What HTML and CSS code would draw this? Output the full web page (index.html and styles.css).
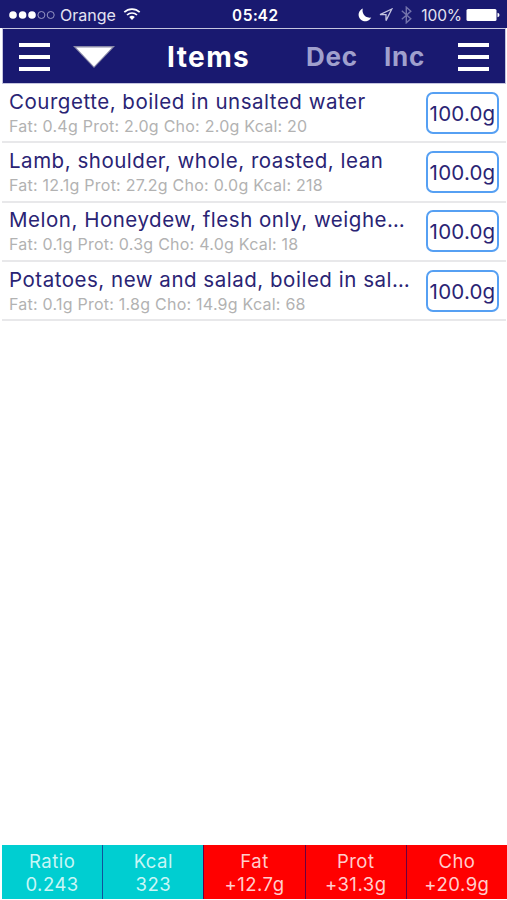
FILE: index.html
```html
<!DOCTYPE html>
<html lang="en">

<head>
    <meta charset="utf-8">
    <title>Items</title>
    <link rel="stylesheet" href="styles.css">
</head>

<body>
    <div class="status-bar">
        <div class="status-left">
            <svg class="signal" width="47" height="10" viewBox="0 0 47 10">
                <circle cx="4" cy="5" r="3.8" fill="#fff"/>
                <circle cx="13.6" cy="5" r="3.8" fill="#fff"/>
                <circle cx="23" cy="5" r="3.8" fill="#fff"/>
                <circle cx="32.4" cy="5" r="3.5" fill="none" stroke="#a4a4cc" stroke-width="0.9"/>
                <circle cx="41.7" cy="5" r="3.5" fill="none" stroke="#a4a4cc" stroke-width="0.9"/>
            </svg>
            <span class="carrier">Orange</span>
            <svg class="wifi" width="18" height="14" viewBox="0 0 18 14">
                <path d="M1.3 5.2a11 11 0 0 1 15.4 0M4 8a7.2 7.2 0 0 1 10 0" fill="none" stroke="#fff" stroke-width="1.7"/>
                <path d="M9 13L6.2 10a4 4 0 0 1 5.6 0z" fill="#fff"/>
            </svg>
        </div>
        <div class="clock">05:42</div>
        <div class="status-right">
            <svg width="14" height="14" viewBox="0 0 14 14">
                <path d="M4.8 .6a6.6 6.6 0 1 0 8.4 8.9A7.2 7.2 0 0 1 4.8 .6z" fill="#fff"/>
            </svg>
            <svg class="location" width="14" height="14" viewBox="0 0 14 14">
                <path d="M12.8 1L1 6.6H7V12.6z" fill="none" stroke="#c4c4e0" stroke-width="1.3"/>
            </svg>
            <svg class="bluetooth" width="11" height="18" viewBox="0 0 11 18">
                <path d="M.8 4.8l9 8L5.3 16.8V1.2l4.5 4-9 8" fill="none" stroke="#7474ac" stroke-width="1.4"/>
            </svg>
            <span class="percent">100%</span>
            <svg class="battery" width="34" height="14" viewBox="0 0 34 14">
                <rect x=".5" y="1" width="30" height="12" rx="1.5" fill="#fff"/>
                <path d="M31.5 4.8q2 .4 2 2.2t-2 2.2z" fill="#fff"/>
            </svg>
        </div>
    </div>

    <div class="header">
        <button class="menu-button" title="Menu"><i></i><i></i><i></i></button>
        <button class="sort-button" title="Sort">
            <svg width="42" height="22" viewBox="0 0 42 22">
                <path d="M0 0H42L21 22z" fill="#8a8aa8"/>
                <path d="M3 1.5H39L21 20.5z" fill="#fff"/>
            </svg>
        </button>
        <div class="title">Items</div>
        <button class="step dec">Dec</button>
        <button class="step inc">Inc</button>
        <button class="menu-button" title="Options"><i></i><i></i><i></i></button>
    </div>

    <div class="items">
        <div class="item">
            <div class="item-text">
                <div class="item-name">Courgette, boiled in unsalted water</div>
                <div class="item-info">Fat: 0.4g Prot: 2.0g Cho: 2.0g Kcal: 20</div>
            </div>
            <button class="weight">100.0g</button>
        </div>
        <div class="item">
            <div class="item-text">
                <div class="item-name">Lamb, shoulder, whole, roasted, lean</div>
                <div class="item-info">Fat: 12.1g Prot: 27.2g Cho: 0.0g Kcal: 218</div>
            </div>
            <button class="weight">100.0g</button>
        </div>
        <div class="item">
            <div class="item-text">
                <div class="item-name">Melon, Honeydew, flesh only, weighe…</div>
                <div class="item-info">Fat: 0.1g Prot: 0.3g Cho: 4.0g Kcal: 18</div>
            </div>
            <button class="weight">100.0g</button>
        </div>
        <div class="item">
            <div class="item-text">
                <div class="item-name">Potatoes, new and salad, boiled in sal…</div>
                <div class="item-info">Fat: 0.1g Prot: 1.8g Cho: 14.9g Kcal: 68</div>
            </div>
            <button class="weight">100.0g</button>
        </div>
    </div>

    <div class="totals">
        <div class="total"><span>Ratio</span><span>0.243</span></div>
        <div class="total"><span>Kcal</span><span>323</span></div>
        <div class="total over"><span>Fat</span><span>+12.7g</span></div>
        <div class="total over"><span>Prot</span><span>+31.3g</span></div>
        <div class="total over"><span>Cho</span><span>+20.9g</span></div>
    </div>
</body>

</html>
```

FILE: styles.css
```css
* {
    box-sizing: border-box;
}

body {
    display: flex;
    flex-direction: column;
    height: 900px;
    margin: 0;
    background: #fff;
    font-family: Inter, 'Liberation Sans', sans-serif;
    overflow: hidden;
}

button {
    padding: 0;
    border: none;
    background: none;
    font-family: inherit;
}

svg {
    display: block;
    flex: none;
}

.status-bar {
    display: grid;
    grid-template-columns: 1fr auto 1fr;
    align-items: center;
    height: 28px;
    padding: 2px 7px 0 9px;
    background: #191970;
    color: #fff;
    font-size: 16px;
}

.status-left,
.status-right {
    display: flex;
    align-items: center;
}

.status-right {
    justify-content: flex-end;
}

.carrier {
    margin-left: 4px;
    color: #e4e4f2;
}

.wifi {
    margin-left: 7px;
    margin-top: -2px;
}

.clock {
    padding-left: 2px;
    font-size: 15.5px;
    font-weight: 600;
    font-variant-numeric: tabular-nums;
    letter-spacing: 0.5px;
}

.location {
    margin-left: 7px;
}

.bluetooth {
    margin-left: 8px;
}

.percent {
    margin-left: 9px;
    color: #e4e4f2;
    font-size: 15.5px;
    letter-spacing: -0.1px;
}

.battery {
    margin-left: 4px;
}

.header {
    display: flex;
    align-items: center;
    height: 56px;
    margin: 0 1px 0 2px;
    padding: 1px 16px 0 16px;
    border: 1px solid #c5c5df;
    background: #191970;
}

.menu-button {
    display: flex;
    flex-direction: column;
    gap: 8px;
    width: 31px;
}

.menu-button i {
    height: 4px;
    background: #fff;
}

.sort-button {
    margin-left: 23px;
}

.title {
    width: 83px;
    margin-left: 52px;
    color: #fff;
    font-size: 28px;
    font-weight: 700;
    letter-spacing: 1.4px;
    white-space: nowrap;
}

.step {
    color: #a0a0cd;
    font-size: 26px;
    font-weight: 700;
    letter-spacing: 0.7px;
    text-align: left;
    white-space: nowrap;
}

.dec {
    width: 52px;
    margin-left: 56px;
}

.inc {
    width: 41px;
    margin: 0 auto 0 26px;
}

.items {
    flex: 1;
    margin: 0 1px 0 2px;
}

.item {
    display: flex;
    align-items: center;
    justify-content: space-between;
    height: 59.3px;
    padding: 0 7px;
    border-bottom: 2px solid #e8e8ea;
}

.item-name {
    color: #2a2474;
    font-size: 20.5px;
    line-height: 26px;
    letter-spacing: 0.52px;
    white-space: nowrap;
}

.item-info {
    color: #b2b2b2;
    font-size: 16px;
    line-height: 22px;
    letter-spacing: 0.24px;
    white-space: nowrap;
}

.weight {
    width: 73px;
    height: 42px;
    padding-top: 1px;
    border: 2px solid #56a0f3;
    border-radius: 7px;
    color: #2a2474;
    font-size: 20.5px;
    letter-spacing: 0.2px;
}

.totals {
    display: flex;
    height: 54px;
    margin: 0 0 1px 2px;
}

.total {
    display: flex;
    flex: 1;
    flex-direction: column;
    align-items: center;
    justify-content: center;
    padding-top: 1px;
    border-left: 1px solid #12529a;
    background: #00ced1;
    color: #c9f6f6;
    font-size: 18.5px;
    line-height: 23px;
    letter-spacing: 0.5px;
}

.total.over {
    border-color: #6b0040;
    background: #f00;
    color: #ffcdcd;
}

.total:first-child {
    border-left: none;
}
```
